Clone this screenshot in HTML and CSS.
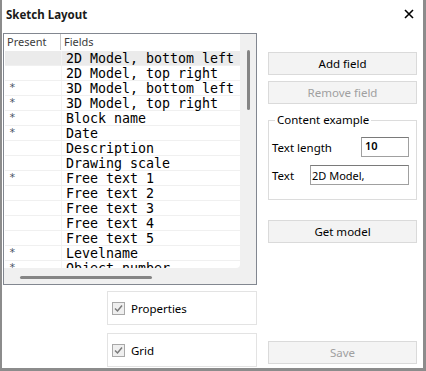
FILE: index.html
```html
<!DOCTYPE html>
<html lang="en">
<head>
   <meta charset="UTF-8">
   <meta name="viewport" content="width=device-width, initial-scale=1.0">
   <title>Sketch Layout</title>
   <link rel="stylesheet" href="styles.css">
</head>
<body>
    <div class="dialog">
        <div class="titlebar">
            <span class="title">Sketch Layout</span>
            <svg class="close" width="10" height="10" viewBox="0 0 10 10">
                <path d="M1 1 L9 9 M9 1 L1 9" stroke="#000" stroke-width="1.6"/>
            </svg>
        </div>

        <div class="content">
            <!-- Left side: fields list and options -->
            <div class="left">
                <div class="listbox">
                    <div class="list-area">
                        <div class="list-head">
                            <span class="head-present">Present</span>
                            <span class="head-fields">Fields</span>
                        </div>
                        <div class="rows">
                            <div class="row selected"><span class="c1"></span><span class="c2">2D Model, bottom left</span></div>
                            <div class="row"><span class="c1"></span><span class="c2">2D Model, top right</span></div>
                            <div class="row"><span class="c1">*</span><span class="c2">3D Model, bottom left</span></div>
                            <div class="row"><span class="c1">*</span><span class="c2">3D Model, top right</span></div>
                            <div class="row"><span class="c1">*</span><span class="c2">Block name</span></div>
                            <div class="row"><span class="c1">*</span><span class="c2">Date</span></div>
                            <div class="row"><span class="c1"></span><span class="c2">Description</span></div>
                            <div class="row"><span class="c1"></span><span class="c2">Drawing scale</span></div>
                            <div class="row"><span class="c1">*</span><span class="c2">Free text 1</span></div>
                            <div class="row"><span class="c1"></span><span class="c2">Free text 2</span></div>
                            <div class="row"><span class="c1"></span><span class="c2">Free text 3</span></div>
                            <div class="row"><span class="c1"></span><span class="c2">Free text 4</span></div>
                            <div class="row"><span class="c1"></span><span class="c2">Free text 5</span></div>
                            <div class="row"><span class="c1">*</span><span class="c2">Levelname</span></div>
                            <div class="row"><span class="c1">*</span><span class="c2">Object number</span></div>
                        </div>
                    </div>
                    <div class="vscroll"><div class="vthumb"></div></div>
                    <div class="hscroll"><div class="hthumb"></div></div>
                    <div class="corner"></div>
                </div>

                <div class="option">
                    <span class="check">
                        <svg width="9" height="9" viewBox="0 0 9 9"><path d="M1 4.5 L3.5 7 L8 1.5" fill="none" stroke="#7a7a7a" stroke-width="1.5"/></svg>
                    </span>
                    <span>Properties</span>
                </div>
                <div class="option option-last">
                    <span class="check">
                        <svg width="9" height="9" viewBox="0 0 9 9"><path d="M1 4.5 L3.5 7 L8 1.5" fill="none" stroke="#7a7a7a" stroke-width="1.5"/></svg>
                    </span>
                    <span>Grid</span>
                </div>
            </div>

            <!-- Right side: actions -->
            <div class="right">
                <button class="btn btn-add">Add field</button>
                <button class="btn btn-remove" disabled>Remove field</button>

                <fieldset class="example">
                    <legend>Content example</legend>
                    <div class="field-row">
                        <label for="textLength">Text length</label>
                        <input type="text" id="textLength" class="input-length" value="10">
                    </div>
                    <div class="field-row row-text">
                        <label for="textValue">Text</label>
                        <input type="text" id="textValue" class="input-text" value="2D Model,">
                    </div>
                </fieldset>

                <button class="btn btn-get">Get model</button>
                <button class="btn btn-save" disabled>Save</button>
            </div>
        </div>
    </div>
</body>
</html>
```

FILE: styles.css
```css
* {
    margin: 0;
    padding: 0;
    box-sizing: border-box;
}

body {
    font-family: "Noto Sans", sans-serif;
    font-size: 11.5px;
    background-color: #ffffff;
    color: #000;
}

.dialog {
    width: 426px;
    height: 371px;
    background-color: #ffffff;
    border-left: 2px solid #8c8c8c;
    border-right: 3px solid #8c8c8c;
    border-bottom: 3px solid #8c8c8c;
    overflow: hidden;
}

.titlebar {
    height: 33px;
    display: flex;
    align-items: center;
    justify-content: space-between;
    padding: 0 9px 5px 4px;
}

.title {
    font-weight: bold;
    font-size: 11.5px;
    color: #1a1a1a;
}

.content {
    display: flex;
    gap: 11px;
    padding-left: 1px;
}

.left {
    width: 254px;
    display: flex;
    flex-direction: column;
}

/* list box with scrollbars */
.listbox {
    height: 252px;
    border: 1px solid #828790;
    display: grid;
    grid-template-columns: 1fr 16px;
    grid-template-rows: 1fr 16px;
    background-color: #f0f0f0;
}

.list-area {
    background-color: #ffffff;
    border-bottom-right-radius: 4px;
    overflow: hidden;
    padding-left: 1px;
}

.list-head {
    display: flex;
    height: 16px;
    line-height: 16px;
    font-size: 11px;
    color: #3c3c3c;
    margin-bottom: 1px;
}

.head-present {
    width: 56px;
    padding-left: 2px;
    border-right: 1px solid #c8c8c8;
}

.head-fields {
    padding-left: 3px;
}

.row {
    display: flex;
    height: 15px;
    border-bottom: 1px solid #f0f0f0;
    font-family: "DejaVu Sans Mono", monospace;
    font-size: 13.3px;
    line-height: 16px;
    white-space: nowrap;
}

.row.selected {
    background-color: #ebebeb;
}

.c1 {
    width: 57px;
    padding-left: 4px;
    color: #4a5468;
    font-size: 11px;
    line-height: 14px;
    border-right: 1px solid #f3f3f3;
}

.c2 {
    padding-left: 4px;
}

.vscroll {
    display: flex;
    justify-content: center;
    padding-top: 16px;
}

.vthumb {
    width: 3px;
    height: 60px;
    background-color: #858585;
    border-radius: 2px;
}

.hscroll {
    padding: 8px 0 0 16px;
}

.hthumb {
    width: 132px;
    height: 3px;
    background-color: #858585;
    border-radius: 2px;
}

.option {
    margin: 6px 0 0 104px;
    width: 150px;
    height: 34px;
    border: 1px solid #e3e3e3;
    display: flex;
    align-items: center;
    gap: 6px;
    padding-left: 4px;
}

.option-last {
    margin-top: 8px;
}

.check {
    width: 13px;
    height: 13px;
    border: 1px solid #a8a8a8;
    background-color: #efefef;
    display: flex;
    align-items: center;
    justify-content: center;
}

/* right column */
.right {
    width: 149px;
    display: flex;
    flex-direction: column;
}

.btn {
    height: 23px;
    font-family: "Noto Sans", sans-serif;
    font-size: 11.5px;
    background-color: #f3f3f3;
    border: 1px solid #dadada;
    color: #000;
}

.btn:disabled {
    color: #a0a0a0;
    background-color: #f4f4f4;
}

.btn-add {
    margin-top: 19px;
}

.btn-remove {
    margin-top: 6px;
}

.example {
    margin-top: 8px;
    border: 1px solid #dcdcdc;
    padding: 9px 7px 14px 3px;
}

.example legend {
    margin-left: 3px;
    padding: 0 2px;
    line-height: 16px;
}

.field-row {
    display: flex;
    align-items: center;
    justify-content: space-between;
}

.row-text {
    margin-top: 8px;
}

.example input {
    height: 20px;
    border: 1px solid #a0a0a0;
    border-top-color: #7a7a7a;
    font-family: "Noto Sans", sans-serif;
    font-size: 11px;
    padding: 0 3px;
    color: #000;
}

.input-length {
    width: 48px;
    padding-bottom: 4px !important;
    font-weight: 600;
}

.input-text {
    width: 99px;
    padding-left: 1px !important;
}

.btn-get {
    margin-top: 20px;
}

.btn-save {
    margin-top: 98px;
}
```
